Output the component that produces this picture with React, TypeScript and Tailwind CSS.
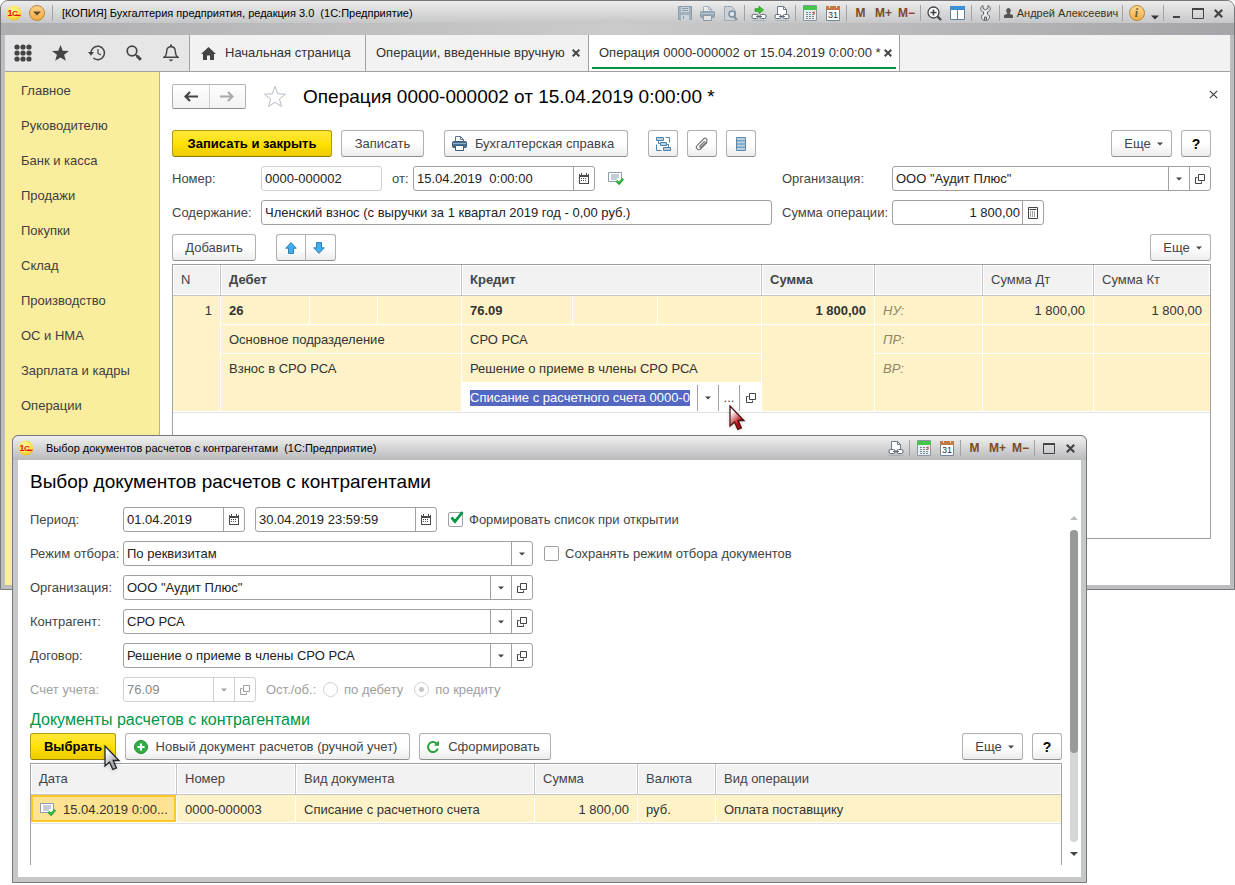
import { useState, type ReactNode } from 'react';
import clsx from 'clsx';

const sections = [
  'Главное',
  'Руководителю',
  'Банк и касса',
  'Продажи',
  'Покупки',
  'Склад',
  'Производство',
  'ОС и НМА',
  'Зарплата и кадры',
  'Операции',
];

/* ---------- Icons ---------- */

function Logo() {
  return (
    <svg width="16" height="16" viewBox="0 0 16 16" className="shrink-0">
      <defs>
        <radialGradient id="logoFill" cx="0.45" cy="0.3" r="0.8">
          <stop offset="0" stopColor="#fff79a" />
          <stop offset="0.6" stopColor="#fbe04b" />
          <stop offset="1" stopColor="#e2b21c" />
        </radialGradient>
      </defs>
      <circle cx="8" cy="8" r="7.5" fill="url(#logoFill)" />
      <text x="1.500" y="11" fontSize="9" fontWeight="bold" fontFamily="Liberation Sans, sans-serif" fill="#e3121b">1</text>
      <text x="6" y="11" fontSize="8" fontWeight="bold" fontFamily="Liberation Sans, sans-serif" fill="#e3121b">С</text>
      <path d="M9 10.300h5.500" stroke="#e3121b" strokeWidth="1.300" />
    </svg>
  );
}

function Caret({ className = 'text-[#444]' }: { className?: string }) {
  return (
    <svg width="6" height="4" viewBox="0 0 6 4" className={clsx('shrink-0', className)}>
      <path d="M0 .5h6L3 3.5z" fill="currentColor" />
    </svg>
  );
}

function OpenIcon() {
  return (
    <svg width="10" height="10" viewBox="0 0 10 10" fill="none" stroke="currentColor">
      <path d="M3.5.5h6v6h-6zM2.5 3.5h-2v6h6v-2" />
    </svg>
  );
}

function DateIcon() {
  return (
    <svg width="10" height="11" viewBox="0 0 10 11">
      <path d="M0 1h10v10H0z" fill="#4a4a4a" />
      <path d="M1 4h8v6H1z" fill="#fff" />
      <path d="M2 0h1v2H2zM7 0h1v2H7z" fill="#4a4a4a" />
      <path d="M1 1h1v1H1zM3 1h4v1H3zM8 1h1v1H8z" fill="#fff" />
      <path d="M2 5.5h6M2 7.5h6" stroke="#4a4a4a" strokeDasharray="1 1" />
    </svg>
  );
}

function SumIcon() {
  return (
    <svg width="10" height="12" viewBox="0 0 10 12">
      <path d="M.5.5h9v11h-9z" fill="#fff" stroke="#444" />
      <path d="M1.5 2.5h7" stroke="#444" />
      <path d="M2 5h6M2 7h6M2 9h6" stroke="#444" strokeDasharray="1 1" />
    </svg>
  );
}

function PostedIcon() {
  return (
    <svg width="16" height="13" viewBox="0 0 16 13" className="shrink-0">
      <path d="M.5.5h13v9h-13z" fill="#fff" stroke="#8a9bb0" />
      <path d="M3 3h8M3 5h8M3 7h6" stroke="#8a9bb0" />
      <path d="M8.5 8.8l2.6 2.6 4-4.6" fill="none" stroke="#1fa02c" strokeWidth="2.4" />
      <path d="M8.9 8.8l2.2 2 3.6-4" fill="none" stroke="#4fd25a" strokeWidth="1" />
    </svg>
  );
}

function PrinterIcon() {
  return (
    <svg width="15" height="15" viewBox="0 0 15 15" className="shrink-0">
      <path d="M3.5 6V.5h5l3 3V6" fill="#fff" stroke="#5b7590" />
      <path d="M8.5.5v3h3" fill="none" stroke="#5b7590" />
      <rect x=".5" y="5.500" width="14" height="6" rx="1" fill="#4d7393" stroke="#395a78" />
      <path d="M1 7.5h13" stroke="#8fb0c9" />
      <path d="M3.5 9.5h8v5h-8z" fill="#fff" stroke="#395a78" />
    </svg>
  );
}

function CalculatorIcon() {
  return (
    <svg width="14" height="16" viewBox="0 0 14 16">
      <path d="M.5.5h13v15H.5z" fill="#e9eef2" stroke="#8b98a4" />
      <path d="M0 1h14v4H0z" fill="#45c54c" />
      <path d="M3 7.500h8M3 9.500h8M3 11.500h8M3 13.500h8" stroke="#7a8894" strokeDasharray="2 1" />
      <path d="M11 6.500v3" stroke="#e34b3c" strokeWidth="1.4" />
    </svg>
  );
}

function CalendarIcon() {
  return (
    <svg width="14" height="16" viewBox="0 0 14 16">
      <path d="M.5 1.5h13v14H.5z" fill="#fff" stroke="#74889c" />
      <path d="M0 1h14v4H0z" fill="#c17a45" />
      <path d="M3.5 0v3M10.5 0v3" stroke="#f3dcc8" />
      <text x="7" y="13" textAnchor="middle" fontSize="9" fontFamily="Liberation Sans, sans-serif" fill="#333">31</text>
    </svg>
  );
}

function LinkPageIcon() {
  return (
    <svg width="16" height="15" viewBox="0 0 16 15">
      <path d="M3.5 9V.5h6l3 3V9" fill="#fff" stroke="#6d7b89" />
      <path d="M9.5.5v3h3" fill="none" stroke="#6d7b89" />
      <rect x="1" y="8.5" width="6" height="4" rx="1.5" fill="#fff" stroke="#5c6b7a" />
      <rect x="9" y="8.5" width="6" height="4" rx="1.5" fill="#fff" stroke="#5c6b7a" />
      <path d="M5 10.5h6" stroke="#5c6b7a" />
      <path d="M1 14.5h14" stroke="#a9b1b9" />
    </svg>
  );
}

function LinkArrowIcon() {
  return (
    <svg width="16" height="15" viewBox="0 0 16 15">
      <path d="M4 2.7h4V.3l4.6 3.7L8 7.6V5.3H4z" fill="#37c72f" stroke="#1f8a1b" strokeWidth="0.7" />
      <rect x="1" y="8.5" width="6" height="4" rx="1.5" fill="#fff" stroke="#5c6b7a" />
      <rect x="9" y="8.5" width="6" height="4" rx="1.5" fill="#fff" stroke="#5c6b7a" />
      <path d="M5 10.5h6" stroke="#5c6b7a" />
      <path d="M1 14.5h14" stroke="#a9b1b9" />
    </svg>
  );
}

function MaximizeIcon() {
  return (
    <svg width="12" height="11" viewBox="0 0 12 11" fill="none" stroke="#444">
      <path d="M.5.5h11v10H.5z" />
      <path d="M0 1h12" strokeWidth="2" />
    </svg>
  );
}

function CrossIcon({ size = 9, width = 2.2 }: { size?: number; width?: number }) {
  return (
    <svg width={size} height={size} viewBox="0 0 9 9" className="shrink-0">
      <path d="M.8.8l7.4 7.4M8.2.8L.8 8.2" stroke="#444" strokeWidth={width} />
    </svg>
  );
}

function MoveArrow({ down }: { down?: boolean }) {
  return (
    <svg width="12" height="12" viewBox="0 0 12 12" className={clsx(down && 'rotate-180')}>
      <path d="M6 .6l5.3 5.6H8.5v5.2h-5V6.2H.7z" fill="#40aef0" stroke="#2f7fae" />
    </svg>
  );
}

function Pointer({ red }: { red?: boolean }) {
  return (
    <svg width="17" height="27" viewBox="0 0 17 27" className="drop-shadow-sm">
      <defs>
        <linearGradient id={red ? 'ptrRed' : 'ptrGray'} x1="0" y1="0" x2="0.6" y2="1">
          <stop offset="0.25" stopColor="#fff" />
          <stop offset="0.8" stopColor={red ? '#b30b10' : '#a4a7ab'} />
        </linearGradient>
      </defs>
      <path
        d="M1 1v20l4.5-4 3.3 7.5 3.6-1.6-3.2-7.4H15z"
        fill={red ? 'url(#ptrRed)' : 'url(#ptrGray)'}
        stroke={red ? '#4d1013' : '#222427'}
        strokeWidth="1.300"
      />
    </svg>
  );
}

/* ---------- Window chrome ---------- */

function TitleButton({ label, children, wide = 'w-[23px]' }: { label: string; children: ReactNode; wide?: string }) {
  return (
    <button aria-label={label} className={clsx('flex h-5 shrink-0 items-center justify-center', wide)}>
      {children}
    </button>
  );
}

function TitleSeparator() {
  return <span className="mx-[2px] h-4 w-px shrink-0 bg-[#a3a3a5]" />;
}

function MemoryButtons() {
  return (
    <div className="flex text-xs font-bold text-[#7d4a26]">
      <button className="w-[23px]">M</button>
      <button className="w-[23px]">M+</button>
      <button className="w-[23px]">M−</button>
    </div>
  );
}

/* ---------- Controls ---------- */

type ButtonProps = { children: ReactNode; className?: string; primary?: boolean; label?: string };

function Button({ children, className, primary, label }: ButtonProps) {
  return (
    <button
      aria-label={label}
      className={clsx(
        'flex h-[27px] shrink-0 items-center justify-center rounded-[3px] border',
        primary
          ? 'border-[#b09a10] border-b-[#8f7d08] bg-linear-to-b from-[#ffe836] via-[#ffe100] to-[#eecb00] font-bold text-black'
          : 'border-[#b0b0b0] border-b-[#8f8f8f] bg-linear-to-b from-white from-50% to-[#ececec] text-[#444]',
        className,
      )}
    >
      {children}
    </button>
  );
}

function MoreButton() {
  return (
    <Button className="w-[61px] gap-[6px] pl-1">
      Еще <Caret />
    </Button>
  );
}

function HelpButton() {
  return (
    <Button className="w-[30px] text-sm">
      <b className="text-black">?</b>
    </Button>
  );
}

type FieldProps = {
  id: string;
  value: string;
  className?: string;
  date?: boolean;
  sum?: boolean;
  pick?: boolean;
  disabled?: boolean;
  readOnly?: boolean;
};

function Field({ id, value, className, date, sum, pick, disabled, readOnly }: FieldProps) {
  const muted = disabled || readOnly;
  const addon = clsx(
    'flex h-full w-[21px] shrink-0 items-center justify-center border-l',
    muted ? 'border-[#d0d0d0] text-[#a0a0a0]' : 'border-[#a0a0a0] text-[#444]',
  );

  return (
    <div className={clsx('flex h-[25px] rounded-[3px] border bg-white', muted ? 'border-[#d0d0d0]' : 'border-[#a0a0a0]', className)}>
      <input
        id={id}
        defaultValue={value}
        disabled={disabled}
        readOnly={readOnly}
        className={clsx(
          'w-full min-w-0 flex-1 bg-transparent outline-none',
          sum ? 'pr-[2px] text-right' : 'pl-[3px]',
          disabled ? 'text-[#8a8a8a]' : 'text-[#222]',
        )}
      />
      {date && <button aria-label="Выбрать дату" className={addon}><DateIcon /></button>}
      {sum && <button aria-label="Калькулятор" className={addon}><SumIcon /></button>}
      {pick && (
        <>
          <button aria-label="Выбрать из списка" disabled={disabled} className={addon}><Caret className="" /></button>
          <button aria-label="Открыть" disabled={disabled} className={addon}><OpenIcon /></button>
        </>
      )}
    </div>
  );
}

function CheckBox({ label, initial }: { label: string; initial: boolean }) {
  const [checked, setChecked] = useState(initial);

  return (
    <label className="relative flex items-center gap-[6px] text-[#444]">
      <input
        type="checkbox"
        checked={checked}
        onChange={() => setChecked(!checked)}
        className="size-[15px] appearance-none rounded-[2px] border border-[#a0a0a0] bg-white"
      />
      {checked && (
        <svg width="14" height="13" viewBox="0 0 14 13" className="pointer-events-none absolute bottom-1 left-[2px]">
          <path d="M1.5 6.5L5 10.5 12.5 1" fill="none" stroke="#009646" strokeWidth="2.8" />
        </svg>
      )}
      {label}
    </label>
  );
}

function Radio({ label, checked }: { label: string; checked?: boolean }) {
  return (
    <label className="flex items-center gap-[6px]">
      <input
        type="radio"
        name="balance"
        disabled
        defaultChecked={checked}
        className="size-[15px] appearance-none rounded-full border border-[#d0d0d0] bg-white checked:bg-[radial-gradient(circle,#c4c4c4_2px,white_3px)]"
      />
      {label}
    </label>
  );
}

function HeadCell({ children, className, span }: { children?: ReactNode; className?: string; span?: number }) {
  return (
    <th
      colSpan={span}
      className={clsx(
        'h-[31px] border-r border-b border-[#c4c4c4] bg-[#f2f2f2] px-2 text-left text-[#444] shadow-[inset_0_0_0_1px_white] last:border-r-0',
        className ?? 'font-normal',
      )}
    >
      {children}
    </th>
  );
}

const cellBase = 'border-r border-b border-white bg-[#fdf2c8] px-2 last:border-r-0';
const cell = `${cellBase} pt-[2px]`;
const tallCell = `${cellBase} pt-[7px] align-top`;

/* ---------- Main window ---------- */

function MainTitleBar() {
  return (
    <div className="bg-linear-to-r from-[#aeaeb1] via-[#cbcbcb] to-[#a5a5a9]">
      <header className="flex h-[22px] items-center bg-linear-to-b from-[#ececec] to-[#c6c7c8] pr-[5px] pl-[5px] pt-[2px]">
        <Logo />
        <button aria-label="Главное меню" className="ml-[7px] flex size-4 items-center justify-center rounded-full border border-[#b98638] bg-linear-to-b from-[#ffd48a] to-[#f3a93f]">
          <svg width="8" height="5" viewBox="0 0 8 5"><path d="M0 .5h8L4 4.500z" fill="#5b4a2c" /></svg>
        </button>
        <span className="mx-[7px] h-4 w-px bg-[#a3a3a5]" />
        <h1 className="ml-[2px] flex-1 text-[11px] whitespace-pre text-black">[КОПИЯ] Бухгалтерия предприятия, редакция 3.0  (1С:Предприятие)</h1>

        <TitleButton label="Сохранить">
          <svg width="14" height="14" viewBox="0 0 14 14">
            <path d="M.5.5h13v13H.5z" fill="#a3b1bd" stroke="#8c9cab" />
            <path d="M3 1h8v5H3zM3 9h8v5H3z" fill="#ccd4da" />
            <path d="M4 2.5h6M4 4.5h6M5.500 10v3" stroke="#8c9cab" />
          </svg>
        </TitleButton>
        <TitleButton label="Печать">
          <span className="opacity-45"><PrinterIcon /></span>
        </TitleButton>
        <TitleButton label="Предварительный просмотр">
          <svg width="14" height="15" viewBox="0 0 14 15">
            <path d="M.5.5h7l4 4v10H.5z" fill="#ccd4da" stroke="#9baab6" />
            <circle cx="8" cy="8" r="3" fill="#dfe5e9" stroke="#7f909f" strokeWidth="1.6" />
            <path d="M10 10.500l3 3.500" stroke="#7f909f" strokeWidth="2" />
          </svg>
        </TitleButton>
        <TitleSeparator />
        <TitleButton label="Перейти по ссылке"><LinkArrowIcon /></TitleButton>
        <TitleButton label="Получить ссылку"><LinkPageIcon /></TitleButton>
        <TitleSeparator />
        <TitleButton label="Калькулятор"><CalculatorIcon /></TitleButton>
        <TitleButton label="Календарь"><CalendarIcon /></TitleButton>
        <TitleSeparator />
        <MemoryButtons />
        <TitleSeparator />
        <TitleButton label="Масштаб">
          <svg width="15" height="15" viewBox="0 0 15 15" fill="none" stroke="#3d4248">
            <circle cx="6.500" cy="6.500" r="5.500" fill="#fff" strokeWidth="1.300" />
            <path d="M3.500 6.500h6M6.500 3.500v6" strokeWidth="1.600" />
            <path d="M10.500 10.500l3.500 3.500" strokeWidth="2.200" />
          </svg>
        </TitleButton>
        <TitleButton label="Разделить окно">
          <svg width="15" height="14" viewBox="0 0 15 14">
            <path d="M.5.5h14v13H.5z" fill="#fff" stroke="#5f7f9c" />
            <path d="M0 0h15v4H0z" fill="#3c8fd6" />
            <path d="M7.500 4v10" stroke="#5f7f9c" />
          </svg>
        </TitleButton>
        <TitleSeparator />
        <TitleButton label="Сервис">
          <svg width="11" height="16" viewBox="0 0 11 16" fill="#e8e8e8" stroke="#5d6166">
            <path d="M3 .6C1 1.500.5 3 .8 4.500c.3 1.200 1.200 2 2.700 2.400v2.400C2 10 1.500 11 1.500 12.200c0 1.800 1.200 3.200 4 3.200s4-1.400 4-3.200c0-1.200-.5-2.200-2-2.900V6.900C9 6.500 9.900 5.700 10.200 4.500 10.500 3 10 1.500 8 .6v3L5.500 4.800 3 3.600z" />
            <path d="M4.500 15v-3h2v3" fill="#bbb" />
          </svg>
        </TitleButton>
        <TitleSeparator />
        <button className="flex w-[118px] shrink-0 items-center justify-center gap-1 text-[11px] whitespace-nowrap text-[#3f3410]">
          <svg width="9" height="10" viewBox="0 0 9 10" fill="#555" className="shrink-0">
            <path d="M2.200 2.500a2.300 2.500 0 0 1 4.600 0c0 1.200-.5 2-1 2.500v.8L9 7.200V10H0V7.200l3.200-1.400V5c-.5-.5-1-1.300-1-2.500z" />
          </svg>
          Андрей Алексеевич
        </button>
        <TitleSeparator />
        <TitleButton label="О программе">
          <span className="flex size-4 items-center justify-center rounded-full border border-[#b98638] bg-linear-to-b from-[#ffd98f] to-[#f0ae3c] font-['Liberation_Serif',serif] text-xs font-bold text-[#6a5a3a] italic">i</span>
        </TitleButton>
        <TitleButton label="Сервисные команды" wide="w-[13px] pt-2">
          <svg width="8" height="5" viewBox="0 0 8 5"><path d="M0 .5h8L4 4.500z" fill="#333" /></svg>
        </TitleButton>
        <TitleSeparator />
        <TitleButton label="Свернуть" wide="w-[21px] pt-2">
          <span className="h-[2px] w-[7px] bg-[#444]" />
        </TitleButton>
        <TitleButton label="Развернуть" wide="w-[21px]"><MaximizeIcon /></TitleButton>
        <TitleButton label="Закрыть" wide="w-[21px]"><CrossIcon /></TitleButton>
      </header>
      <div className="h-3" />
    </div>
  );
}

function TabBar() {
  const tool = 'flex flex-1 items-center justify-center text-[#444]';

  return (
    <nav className="flex h-[37px] border-b border-[#a0a0a0] bg-[#f2f2f2] text-[#333]">
      <div className="flex w-[184px] bg-[#e6e6e6]">
        <button aria-label="Меню функций" className={tool}>
          <svg width="18" height="18" viewBox="0 0 18 18" fill="currentColor">
            {[3, 9, 15].map((y) => [3, 9, 15].map((x) => <circle key={`${x}-${y}`} cx={x} cy={y} r="2.6" />))}
          </svg>
        </button>
        <button aria-label="Избранное" className={tool}>
          <svg width="17" height="16" viewBox="0 0 17 16" fill="currentColor">
            <path d="M8.500 0l2.200 5.700 6.300.3-4.900 3.800 1.700 6-5.300-3.400-5.300 3.400 1.700-6L0 6l6.300-.3z" />
          </svg>
        </button>
        <button aria-label="История" className={tool}>
          <svg width="18" height="16" viewBox="0 0 18 16" fill="none" stroke="currentColor" strokeWidth="1.500">
            <path d="M3 8.500A6.700 6.700 0 1 1 5.300 13" />
            <path d="M10 4v4.500l3 1.500" strokeWidth="1.200" />
            <path d="M0 7h6l-3 3.800z" fill="currentColor" stroke="none" />
          </svg>
        </button>
        <button aria-label="Поиск" className={tool}>
          <svg width="16" height="16" viewBox="0 0 16 16" fill="none" stroke="currentColor">
            <circle cx="6" cy="6" r="4.800" strokeWidth="1.700" />
            <path d="M9.500 9.500l2 2" strokeWidth="1.500" />
            <path d="M10.800 10.800l4 4" strokeWidth="3" />
          </svg>
        </button>
        <button aria-label="Оповещения" className={tool}>
          <svg width="16" height="18" viewBox="0 0 16 18" fill="none" stroke="currentColor" strokeWidth="1.400">
            <path d="M1 13.300c2-1.300 2.700-3 2.700-6C3.700 4.500 5 2.800 8 2.800s4.300 1.700 4.300 4.500c0 3 .7 4.700 2.700 6z" />
            <path d="M8 2.500V.5" strokeWidth="2" />
            <path d="M5.500 15.500h5L8 17.500z" fill="currentColor" stroke="none" />
          </svg>
        </button>
      </div>
      <a href="#home" className="flex w-[177px] items-center gap-[9px] border-x border-[#a0a0a0] pl-[11px]">
        <svg width="15" height="13" viewBox="0 0 15 13" fill="#444">
          <path d="M7.500 0L15 7h-2v6H9V8.500H6V13H2V7H0z" />
        </svg>
        Начальная страница
      </a>
      <div className="flex w-[223px] items-center justify-between border-r border-[#a0a0a0] pr-2 pl-[10px]">
        <a href="#operations" className="whitespace-nowrap">Операции, введенные вручную</a>
        <button aria-label="Закрыть вкладку"><CrossIcon size={8} /></button>
      </div>
      <div className="flex w-[311px] border-r border-[#a0a0a0] bg-white px-[3px] pb-[2px]">
        <div className="flex flex-1 items-center justify-between border-b-2 border-[#009646] pt-1 pr-1 pl-[7px]">
          <a href="#operation" className="whitespace-nowrap">Операция 0000-000002 от 15.04.2019 0:00:00 *</a>
          <button aria-label="Закрыть вкладку"><CrossIcon size={8} /></button>
        </div>
      </div>
    </nav>
  );
}

function EntriesTable() {
  const hint = 'text-[#8f8763] italic';

  return (
    <div className="mt-[3px] h-[275px] border border-[#a0a0a0]">
      <table className="w-full table-fixed border-separate border-spacing-0 border-b border-[#e2e2e2] text-[#333]">
        <colgroup>
          <col className="w-12" />
          <col className="w-[89px]" />
          <col className="w-[68px]" />
          <col className="w-[84px]" />
          <col className="w-[111px]" />
          <col className="w-[85px]" />
          <col className="w-[104px]" />
          <col className="w-[113px]" />
          <col className="w-[108px]" />
          <col className="w-[111px]" />
          <col />
        </colgroup>
        <thead>
          <tr>
            <HeadCell>N</HeadCell>
            <HeadCell span={3} className="font-bold">Дебет</HeadCell>
            <HeadCell span={3} className="font-bold">Кредит</HeadCell>
            <HeadCell className="font-bold">Сумма</HeadCell>
            <HeadCell />
            <HeadCell>Сумма Дт</HeadCell>
            <HeadCell>Сумма Кт</HeadCell>
          </tr>
        </thead>
        <tbody>
          <tr className="h-[29px]">
            <td rowSpan={4} className={clsx(tallCell, 'text-right')}>1</td>
            <td className={clsx(cell, 'font-bold')}>26</td>
            <td className={cell} />
            <td className={cell} />
            <td className={clsx(cell, 'font-bold')}>76.09</td>
            <td className={cell} />
            <td className={cell} />
            <td className={clsx(cell, 'text-right font-bold')}>1 800,00</td>
            <td className={clsx(cell, hint)}>НУ:</td>
            <td className={clsx(cell, 'text-right')}>1 800,00</td>
            <td className={clsx(cell, 'text-right')}>1 800,00</td>
          </tr>
          <tr className="h-[29px]">
            <td colSpan={3} className={cell}>Основное подразделение</td>
            <td colSpan={3} className={cell}>СРО РСА</td>
            <td rowSpan={3} className={cell} />
            <td className={clsx(cell, hint)}>ПР:</td>
            <td className={cell} />
            <td className={cell} />
          </tr>
          <tr className="h-[29px]">
            <td colSpan={3} rowSpan={2} className={tallCell}>Взнос в СРО РСА</td>
            <td colSpan={3} className={cell}>Решение о приеме в члены СРО РСА</td>
            <td rowSpan={2} className={clsx(tallCell, hint)}>ВР:</td>
            <td rowSpan={2} className={cell} />
            <td rowSpan={2} className={cell} />
          </tr>
          <tr className="h-[29px]">
            <td colSpan={3} className="bg-white pl-2">
              <div className="flex h-[26px] items-center justify-between">
                <input
                  aria-label="Документ расчетов"
                  defaultValue="Списание с расчетного счета 0000-0"
                  className="field-sizing-content h-4 bg-[#5468c2] text-white outline-none"
                />
                <div className="flex h-full text-[#444]">
                  <button aria-label="Выбрать из списка" className="flex w-[21px] items-center justify-center border-l border-[#a0a0a0]"><Caret /></button>
                  <button aria-label="Показать все" className="w-[21px] border-l border-[#a0a0a0]">...</button>
                  <button aria-label="Открыть" className="flex w-[23px] items-center justify-center border-l border-[#a0a0a0]"><OpenIcon /></button>
                </div>
              </div>
            </td>
          </tr>
        </tbody>
      </table>
    </div>
  );
}

function OperationForm() {
  return (
    <main className="flex-1 bg-white pt-3 pr-[19px] pb-[46px] pl-3 text-[#444]">
      <div className="flex h-[25px] items-center">
        <div className="flex h-[25px] w-[74px] rounded-[2px] border border-[#b0b0b0] border-b-[#8f8f8f] bg-linear-to-b from-white to-[#f2f2f2]">
          <button aria-label="Назад" className="flex flex-1 items-center justify-center border-r border-[#d0d0d0]">
            <svg width="14" height="11" viewBox="0 0 14 11"><path d="M14 5.500H3M6 1L1.500 5.500 6 10" fill="none" stroke="#444" strokeWidth="2.200" /></svg>
          </button>
          <button aria-label="Вперед" className="flex flex-1 items-center justify-center">
            <svg width="14" height="11" viewBox="0 0 14 11"><path d="M0 5.500h11M8 1l4.500 4.500L8 10" fill="none" stroke="#aaa" strokeWidth="2.200" /></svg>
          </button>
        </div>
        <button aria-label="Добавить в избранное" className="ml-[17px]">
          <svg width="24" height="23" viewBox="0 0 24 23" fill="#fff" stroke="#b5bcc6">
            <path d="M12 1.500l2.800 7.300 7.700.3-6 4.900 2 7.500-6.500-4.200-6.500 4.200 2-7.500-6-4.900 7.700-.3z" />
          </svg>
        </button>
        <h2 className="ml-4 flex-1 text-[19px] text-black">Операция 0000-000002 от 15.04.2019 0:00:00 *</h2>
        <button aria-label="Закрыть форму" className="-mr-3 flex size-5 items-center justify-center self-start"><CrossIcon size={9} width={1.2} /></button>
      </div>

      <div className="mt-[21px] flex">
        <Button primary className="w-40">Записать и закрыть</Button>
        <Button className="ml-[9px] w-[83px]">Записать</Button>
        <Button className="ml-5 w-[184px] gap-2 pr-[6px]"><PrinterIcon />Бухгалтерская справка</Button>
        <Button label="Структура подчиненности" className="ml-5 w-[30px]">
          <svg width="15" height="14" viewBox="0 0 15 14" fill="#b9d3e4" stroke="#4d83a8">
            <path d="M.5.5h7v3h-7zM4.500 5.500h6v3h-6zM7.500 10.500h7v3h-7z" />
            <path d="M9.500 .5h4v5M2.500 3.500v3h2M.5 7.500v6h5M12.500 10.500v-3h-2" fill="none" />
          </svg>
        </Button>
        <Button label="Присоединенные файлы" className="ml-[9px] w-[30px]">
          <svg width="14" height="14" viewBox="0 0 14 14" fill="none" stroke="#777" strokeWidth="1.200">
            <path d="M9.800 4.200L5 9c-.7.800.3 1.800 1.100 1.100l5.300-5.300c2-2-.8-4.800-2.800-2.800L2.200 8.300C-.2 10.800 3.200 14.200 5.700 11.800l6.500-6.500" />
          </svg>
        </Button>
        <Button label="Реестр" className="ml-[9px] w-[30px]">
          <svg width="10" height="14" viewBox="0 0 10 14" fill="#b9d3e4" stroke="#5b88a8">
            <path d="M.5.5h9v13h-9zM.5 3.800h9M.5 7h9M.5 10.200h9" />
          </svg>
        </Button>
        <div className="ml-auto flex gap-[9px]">
          <MoreButton />
          <HelpButton />
        </div>
      </div>

      <div className="mt-[9px] flex items-center">
        <label htmlFor="number" className="w-[89px]">Номер:</label>
        <Field id="number" value="0000-000002" readOnly className="w-[121px]" />
        <label htmlFor="date" className="w-[31px] pl-[10px]">от:</label>
        <Field id="date" value="15.04.2019  0:00:00" date className="w-[182px]" />
        <div className="w-[187px] pl-[13px]"><PostedIcon /></div>
        <label htmlFor="company" className="w-[110px]">Организация:</label>
        <Field id="company" value={'ООО "Аудит Плюс"'} pick className="flex-1" />
      </div>
      <div className="mt-[9px] flex items-center">
        <label htmlFor="content" className="w-[89px]">Содержание:</label>
        <Field id="content" value="Членский взнос (с выручки за 1 квартал 2019 год - 0,00 руб.)" className="w-[511px]" />
        <label htmlFor="total" className="ml-[10px] w-[110px] whitespace-nowrap">Сумма операции:</label>
        <Field id="total" value="1 800,00" sum className="w-[152px]" />
      </div>

      <div className="mt-[9px] flex">
        <Button className="w-[84px]">Добавить</Button>
        <div className="ml-5 flex">
          <Button label="Вверх" className="w-[29px] rounded-r-none border-r-0"><MoveArrow /></Button>
          <Button label="Вниз" className="w-[31px] rounded-l-none pr-1"><MoveArrow down /></Button>
        </div>
        <div className="ml-auto"><MoreButton /></div>
      </div>

      <EntriesTable />
    </main>
  );
}

/* ---------- Document picker ---------- */

function PickerRow({ label, id, children }: { label: string; id: string; children: ReactNode }) {
  return (
    <div className="flex items-center">
      <label htmlFor={id} className="w-[93px] shrink-0 whitespace-nowrap">{label}</label>
      {children}
    </div>
  );
}

function DocumentPicker() {
  return (
    <section className="absolute top-[435px] left-3 w-[1075px] rounded-t-md border border-[#77787b] bg-[#c6c7c9] text-[#444]">
      <header className="flex h-6 items-center rounded-t-md bg-linear-to-b from-[#f0f0f0] to-[#b9babc] pr-[5px] pl-[5px]">
        <Logo />
        <h2 className="ml-3 flex-1 text-[11px] whitespace-pre text-black">Выбор документов расчетов с контрагентами  (1С:Предприятие)</h2>
        <TitleButton label="Получить ссылку"><LinkPageIcon /></TitleButton>
        <TitleSeparator />
        <TitleButton label="Калькулятор"><CalculatorIcon /></TitleButton>
        <TitleButton label="Календарь"><CalendarIcon /></TitleButton>
        <TitleSeparator />
        <MemoryButtons />
        <TitleSeparator />
        <TitleButton label="Развернуть"><MaximizeIcon /></TitleButton>
        <TitleButton label="Закрыть" wide="w-[21px]"><CrossIcon /></TitleButton>
      </header>

      <div className="mx-[5px] mb-[5px] flex bg-white pb-3 pl-3">
        <div className="min-w-0 flex-1">
          <h3 className="mt-2 text-[19px] leading-7 text-black">Выбор документов расчетов с контрагентами</h3>
          <div className="mt-[11px] flex flex-col gap-[9px]">
            <PickerRow label="Период:" id="from">
              <Field id="from" value="01.04.2019" date className="w-[122px]" />
              <Field id="to" value="30.04.2019 23:59:59" date className="mr-[11px] ml-[10px] w-[182px]" />
              <CheckBox label="Формировать список при открытии" initial />
            </PickerRow>
            <PickerRow label="Режим отбора:" id="mode">
              <div className="relative mr-[11px] flex w-[410px]">
                <select id="mode" className="h-[25px] w-full appearance-none rounded-[3px] border border-[#a0a0a0] bg-white pl-[3px] text-[#222]">
                  <option>По реквизитам</option>
                </select>
                <span className="pointer-events-none absolute inset-y-px right-px flex w-[21px] items-center justify-center border-l border-[#a0a0a0]"><Caret /></span>
              </div>
              <CheckBox label="Сохранять режим отбора документов" initial={false} />
            </PickerRow>
            <PickerRow label="Организация:" id="org">
              <Field id="org" value={'ООО "Аудит Плюс"'} pick className="w-[410px]" />
            </PickerRow>
            <PickerRow label="Контрагент:" id="partner">
              <Field id="partner" value="СРО РСА" pick className="w-[410px]" />
            </PickerRow>
            <PickerRow label="Договор:" id="contract">
              <Field id="contract" value="Решение о приеме в члены СРО РСА" pick className="w-[410px]" />
            </PickerRow>
            <div className="text-[#a0a0a0]">
              <PickerRow label="Счет учета:" id="account">
                <Field id="account" value="76.09" pick disabled className="w-[133px]" />
                <span className="w-[67px] pl-[10px]">Ост./об.:</span>
                <Radio label="по дебету" />
                <span className="w-[11px]" />
                <Radio label="по кредиту" checked />
              </PickerRow>
            </div>
          </div>

          <h4 className="mt-[6px] text-base text-[#009646]">Документы расчетов с контрагентами</h4>
          <div className="mt-px flex gap-[9px]">
            <Button primary className="w-[86px]">Выбрать</Button>
            <Button className="w-[285px] gap-2 pr-1">
              <svg width="14" height="14" viewBox="0 0 14 14">
                <circle cx="7" cy="7" r="6.500" fill="#35ad45" stroke="#1e8a30" />
                <path d="M7 3.500v7M3.500 7h7" stroke="#fff" strokeWidth="2" />
              </svg>
              Новый документ расчетов (ручной учет)
            </Button>
            <Button className="w-[132px] gap-2 pr-1">
              <svg width="14" height="14" viewBox="0 0 14 14">
                <path d="M11.800 8.500a5 5 0 1 1-1.300-5" fill="none" stroke="#2ca03a" strokeWidth="2" />
                <path d="M13 .5v5.200H7.800z" fill="#2ca03a" />
              </svg>
              Сформировать
            </Button>
            <div className="ml-auto flex gap-[9px]">
              <MoreButton />
              <HelpButton />
            </div>
          </div>

          <div className="mt-[3px] h-[102px] border border-b-0 border-[#a0a0a0]">
            <table className="w-full table-fixed border-separate border-spacing-0 border-b border-[#e2e2e2] text-[#333]">
              <colgroup>
                <col className="w-[146px]" />
                <col className="w-[119px]" />
                <col className="w-[239px]" />
                <col className="w-[103px]" />
                <col className="w-[78px]" />
                <col />
              </colgroup>
              <thead>
                <tr>
                  <HeadCell>Дата</HeadCell>
                  <HeadCell>Номер</HeadCell>
                  <HeadCell>Вид документа</HeadCell>
                  <HeadCell>Сумма</HeadCell>
                  <HeadCell>Валюта</HeadCell>
                  <HeadCell>Вид операции</HeadCell>
                </tr>
              </thead>
              <tbody>
                <tr className="h-7">
                  <td className="border-r border-b border-white bg-[#fde392] pt-[2px] shadow-[inset_0_0_0_2px_#fbc827]">
                    <div className="flex items-center gap-[7px] pl-[9px]"><PostedIcon />15.04.2019 0:00...</div>
                  </td>
                  <td className={cell}>0000-000003</td>
                  <td className={cell}>Списание с расчетного счета</td>
                  <td className={clsx(cell, 'text-right')}>1 800,00</td>
                  <td className={cell}>руб.</td>
                  <td className={cell}>Оплата поставщику</td>
                </tr>
              </tbody>
            </table>
          </div>
        </div>

        {/* Scroll rail */}
        <div className="mt-14 ml-2 flex w-[11px] flex-col items-start">
          <svg width="8" height="4" viewBox="0 0 8 4"><path d="M4 0l4 4H0z" fill="#bbb" /></svg>
          <div className="mt-[10px] flex w-2 flex-1 flex-col rounded-full bg-[#d6d6d6]">
            <div className="h-[223px] rounded-full bg-[#999]" />
          </div>
          <svg width="8" height="4" viewBox="0 0 8 4" className="mt-[10px] mb-[9px]"><path d="M0 0h8L4 4z" fill="#444" /></svg>
        </div>
      </div>

      <div className="pointer-events-none absolute top-[309px] left-[91px]"><Pointer /></div>
    </section>
  );
}

export default function App() {
  return (
    <div className="relative min-h-screen bg-white font-['Liberation_Sans',Arial,sans-serif] text-[13px] leading-4">
      <div className="overflow-hidden rounded-t-lg border border-[#77787b] bg-[#bcbdbf]">
        <MainTitleBar />
        <div className="mx-1 mb-1">
          <TabBar />
          <div className="flex">
            <aside className="w-[155px] shrink-0 border-r border-[#c2b469] bg-[#fbed9e] pt-[1px] text-[#404040]">
              {sections.map((name) => (
                <a key={name} href="#section" className="flex h-[35px] items-center pl-4">{name}</a>
              ))}
            </aside>
            <OperationForm />
          </div>
        </div>
      </div>

      <DocumentPicker />
      <div className="pointer-events-none absolute top-[405px] left-[729px]"><Pointer red /></div>
    </div>
  );
}
